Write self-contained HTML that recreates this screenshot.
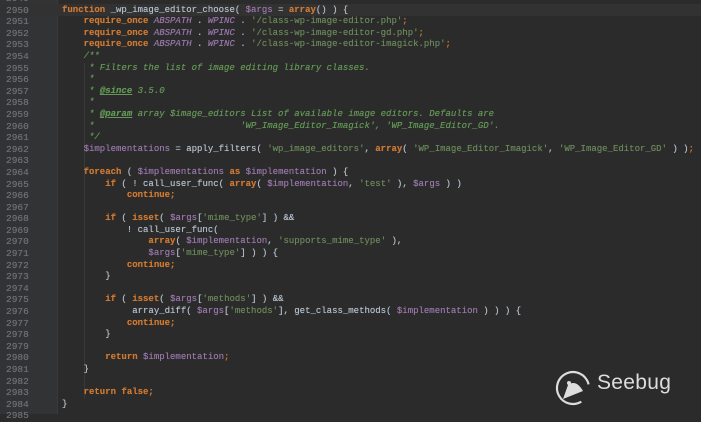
<!DOCTYPE html>
<html><head><meta charset="utf-8"><style>
html,body{margin:0;padding:0;width:701px;height:414px;overflow:hidden;background:#2b2b2b;}
#g{position:absolute;left:0;top:0;width:57px;height:414px;background:#313335;border-right:1px solid #3a3a3a;}
#hl{position:absolute;left:0;top:4px;width:701px;height:12px;background:#323232;}
pre{position:absolute;margin:0;top:-7px;font-family:"Liberation Mono",monospace;font-size:9px;line-height:11.59px;color:#b3bfcc;text-shadow:0 0 0.4px currentColor;}
#ln{left:6px;color:#6e7175;font-size:9.5px;}
#code{left:62px;}
.k{color:#cc7832;font-weight:bold}
.p{color:#cc7832}
.c{color:#9876aa;font-style:italic}
.v{color:#9876aa}
.s{color:#6a8759}
.m{color:#629755;font-style:italic}
.t{color:#629755;font-style:italic;font-weight:bold;text-decoration:underline}
#logo{position:absolute;left:554px;top:369px;}
#lt{position:absolute;left:597px;top:371px;font-family:"Liberation Sans",sans-serif;font-size:21px;color:#ddd;letter-spacing:0.3px}
.ig{position:absolute;width:1px;background:#393939;}
</style></head><body>
<div id="g"></div><div id="hl"></div>
<div class="ig" style="left:84px;top:63px;height:336px"></div>
<pre id="ln">2949
2950
2951
2952
2953
2954
2955
2956
2957
2958
2959
2960
2961
2962
2963
2964
2965
2966
2967
2968
2969
2970
2971
2972
2973
2974
2975
2976
2977
2978
2979
2980
2981
2982
2983
2984
2985</pre>
<pre id="code"> */
<span class="k">function</span> _wp_image_editor_choose( <span class="v">$args</span> = <span class="k">array</span>() ) {
    <span class="k">require_once</span> <span class="c">ABSPATH</span> . <span class="c">WPINC</span> . <span class="s">'/class-wp-image-editor.php'</span><span class="p">;</span>
    <span class="k">require_once</span> <span class="c">ABSPATH</span> . <span class="c">WPINC</span> . <span class="s">'/class-wp-image-editor-gd.php'</span><span class="p">;</span>
    <span class="k">require_once</span> <span class="c">ABSPATH</span> . <span class="c">WPINC</span> . <span class="s">'/class-wp-image-editor-imagick.php'</span><span class="p">;</span>
    <span class="m">/**</span>
<span class="m">     * Filters the list of image editing library classes.</span>
<span class="m">     *</span>
<span class="m">     * </span><span class="t">@since</span><span class="m"> 3.5.0</span>
<span class="m">     *</span>
<span class="m">     * </span><span class="t">@param</span><span class="m"> array $image_editors List of available image editors. Defaults are</span>
<span class="m">     *                           'WP_Image_Editor_Imagick', 'WP_Image_Editor_GD'.</span>
<span class="m">     */</span>
    <span class="v">$implementations</span> = apply_filters( <span class="s">'wp_image_editors'</span>, <span class="k">array</span>( <span class="s">'WP_Image_Editor_Imagick'</span>, <span class="s">'WP_Image_Editor_GD'</span> ) )<span class="p">;</span>

    <span class="k">foreach</span> ( <span class="v">$implementations</span> <span class="k">as</span> <span class="v">$implementation</span> ) {
        <span class="k">if</span> ( ! call_user_func( <span class="k">array</span>( <span class="v">$implementation</span>, <span class="s">'test'</span> ), <span class="v">$args</span> ) )
            <span class="k">continue;</span>

        <span class="k">if</span> ( <span class="k">isset</span>( <span class="v">$args</span>[<span class="s">'mime_type'</span>] ) &amp;&amp;
            ! call_user_func(
                <span class="k">array</span>( <span class="v">$implementation</span>, <span class="s">'supports_mime_type'</span> ),
                <span class="v">$args</span>[<span class="s">'mime_type'</span>] ) ) {
            <span class="k">continue;</span>
        }

        <span class="k">if</span> ( <span class="k">isset</span>( <span class="v">$args</span>[<span class="s">'methods'</span>] ) &amp;&amp;
             array_diff( <span class="v">$args</span>[<span class="s">'methods'</span>], get_class_methods( <span class="v">$implementation</span> ) ) ) {
            <span class="k">continue;</span>
        }

        <span class="k">return</span> <span class="v">$implementation</span><span class="p">;</span>
    }

    <span class="k">return false;</span>
}
</pre>
<svg id="logo" width="38" height="38" viewBox="0 0 38 38"><circle cx="19" cy="19" r="16" fill="none" stroke="#ddd" stroke-width="2.2" stroke-dasharray="80 20" transform="rotate(60 19 19)"/><path d="M9 30 L14 16 Q22 10 29 22 Z" fill="#ddd"/><circle cx="15" cy="14" r="2" fill="#ddd"/></svg>
<div id="lt">Seebug</div>
</body></html>
